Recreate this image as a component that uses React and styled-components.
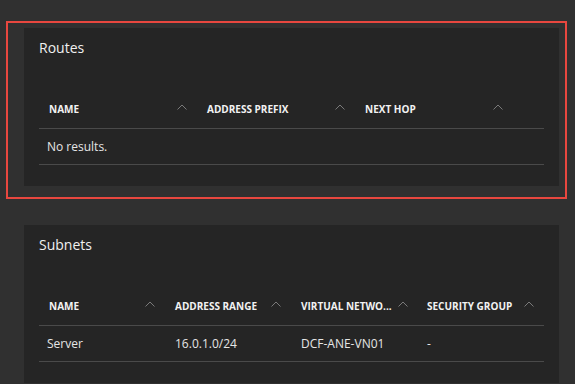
import React from "react";
import styled, { createGlobalStyle } from "styled-components";

const Global = createGlobalStyle`
  html, body { margin: 0; padding: 0; background: #303030; }
  body { font-family: "Open Sans", "Noto Sans", sans-serif; color: #e6e6e6; }
`;

const Page = styled.div`
  position: relative;
  width: 575px;
  height: 384px;
  overflow: hidden;
  padding: 28px 16px 0 24px;
  box-sizing: border-box;
  display: flex;
  flex-direction: column;
  gap: 39px;
`;

const Highlight = styled.div`
  position: absolute;
  left: 6px;
  top: 21px;
  width: 561px;
  height: 178px;
  box-sizing: border-box;
  border: 2px solid #e8473f;
  pointer-events: none;
`;

const Panel = styled.section`
  width: 535px;
  box-sizing: border-box;
  background: #252525;
  padding: 10px 15px 21px 15px;
`;

const Title = styled.h2`
  margin: 0;
  font-size: 14px;
  font-weight: 400;
  line-height: 20px;
  color: #f0f0f0;
`;

const Table = styled.div`
  margin-top: 34px;
  display: grid;
  grid-template-columns: ${(p) => p.$cols};
`;

const HeadCell = styled.div`
  height: 37px;
  display: flex;
  align-items: center;
  justify-content: space-between;
  padding: 0 10px 2px 10px;
  box-sizing: border-box;
  border-bottom: 1px solid #4a4a4a;
  font-size: 10px;
  font-weight: 700;
  color: #f2f2f2;
  white-space: nowrap;
`;

const HeadLabel = styled.span`
  white-space: nowrap;
`;

const Caret = styled.svg`
  flex: none;
  width: 10px;
  height: 6px;
  margin-left: 6px;
  margin-top: -5px;
`;

const Cell = styled.div`
  height: 35px;
  display: flex;
  align-items: center;
  padding: 0 10px 0 ${(p) => (p.$first ? "8px" : "10px")};
  border-bottom: 1px solid #4a4a4a;
  font-size: 12px;
  color: #e6e6e6;
  white-space: nowrap;
  grid-column: ${(p) => p.$span || "auto"};
`;

const SortCaret = () => (
  <Caret viewBox="0 0 10 6">
    <path d="M0.5 5.5 L5 1 L9.5 5.5" fill="none" stroke="#7a7a7a" strokeWidth="1" />
  </Caret>
);

const Head = ({ label, sortable = true }) => (
  <HeadCell>
    <HeadLabel>{label}</HeadLabel>
    {sortable && <SortCaret />}
  </HeadCell>
);

export default function App() {
  return (
    <>
      <Global />
      <Page>
        <Panel>
          <Title>Routes</Title>
          <Table $cols="158px 158px 158px 1fr">
            <Head label="NAME" />
            <Head label="ADDRESS PREFIX" />
            <Head label="NEXT HOP" />
            <HeadCell />
            <Cell $first $span="1 / -1">No results.</Cell>
          </Table>
        </Panel>
        <Panel>
          <Title>Subnets</Title>
          <Table $cols="126px 126px 126px 1fr">
            <Head label="NAME" />
            <Head label="ADDRESS RANGE" />
            <Head label="VIRTUAL NETWO..." />
            <Head label="SECURITY GROUP" />
            <Cell $first>Server</Cell>
            <Cell>16.0.1.0/24</Cell>
            <Cell>DCF-ANE-VN01</Cell>
            <Cell>-</Cell>
          </Table>
        </Panel>
        <Highlight />
      </Page>
    </>
  );
}
